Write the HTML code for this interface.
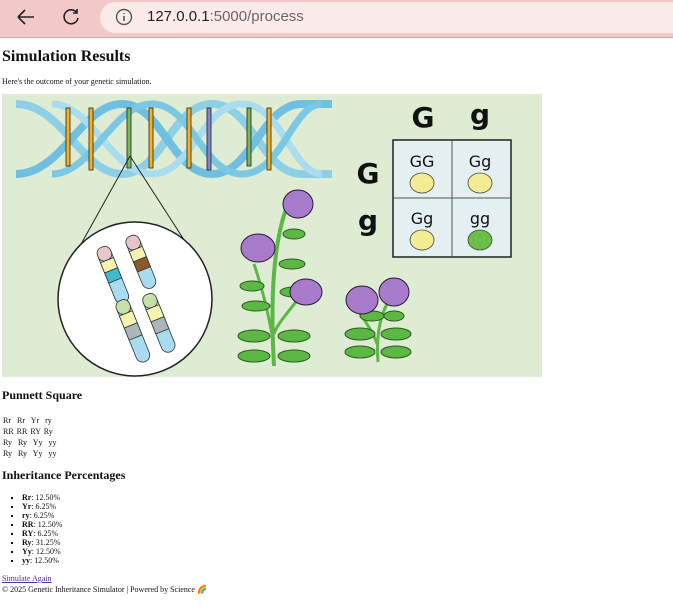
<!DOCTYPE html>
<html><head><style>
body{margin:0;width:673px;height:607px;overflow:hidden;background:#fff;font-family:"Liberation Serif",serif;color:#111;position:relative}
.bar{position:absolute;left:0;top:0;width:673px;height:37px;background:#f3c8c8;border-bottom:1px solid #d9a9a9}
.pill{position:absolute;left:100px;top:2px;width:590px;height:31px;border-radius:16px;background:#fbeceb}
.url{position:absolute;left:147px;top:8px;font-family:"Liberation Sans",sans-serif;font-size:15px;color:#222}
.url span{color:#6b6466}
.a{position:absolute;white-space:nowrap}
h2,h3{margin:0;font-weight:bold}
.s{font-size:8px;line-height:11px}
ul{margin:0;padding:0;list-style:none}
li{font-size:8px;line-height:9px;position:relative;padding-left:22px}
li:before{content:"";position:absolute;left:11px;top:4px;width:2px;height:2px;background:#111}
a{color:#5a2b9a}
</style></head><body>
<div class="bar"><div class="pill"></div>
<svg class="a" style="left:14px;top:8px" width="70" height="20" viewBox="0 0 70 20"><path d="M4 9H20M4 9L11 2M4 9L11 16" stroke="#222" stroke-width="1.6" fill="none"/><path d="M63 5A7 7 0 1 0 64 10M63 1V5H59" stroke="#222" stroke-width="1.6" fill="none"/></svg>
<svg class="a" style="left:115px;top:8px" width="18" height="18"><circle cx="9" cy="9" r="7.5" stroke="#555" stroke-width="1.4" fill="none"/><path d="M9 8V13M9 5V6" stroke="#555" stroke-width="1.6"/></svg>
<div class="url">127.0.0.1<span>:5000/process</span></div></div>
<h2 class="a" style="left:2px;top:48px;font-size:16px">Simulation Results</h2>
<div class="a s" style="left:2px;top:76px">Here's the outcome of your genetic simulation.</div>
<svg class="a" style="left:2px;top:94px" width="540" height="283" viewBox="0 0 540 283">
<rect width="540" height="283" fill="#deecd3"/>
<g fill="none">
<path d="M14 10 C60 10,80 80,120 80 C160 80,170 10,210 10 C250 10,260 80,300 80 L330 80" stroke="#8dd0e6" stroke-width="8"/>
<path d="M14 80 C60 80,80 10,120 10 C160 10,170 80,210 80 C250 80,260 10,300 10 L330 10" stroke="#6fc0e0" stroke-width="8"/>
<path d="M50 10 C90 10,110 80,150 80 C190 80,200 10,240 10 C280 10,290 80,320 80" stroke="#a8dcee" stroke-width="7"/>
<path d="M50 80 C90 80,110 10,150 10 C190 10,200 80,240 80 C280 80,290 10,320 10" stroke="#7cc8e4" stroke-width="7"/>
</g>
<g stroke="#222" stroke-width="0.8">
<rect x="64" y="14" width="4" height="58" fill="#f5b21e"/><rect x="87" y="14" width="4" height="62" fill="#f5b21e"/>
<rect x="125" y="14" width="4" height="60" fill="#7ab85a"/><rect x="147" y="14" width="4" height="60" fill="#f5b21e"/>
<rect x="185" y="14" width="4" height="60" fill="#f5b21e"/><rect x="205" y="14" width="4" height="62" fill="#7f86c9"/>
<rect x="245" y="14" width="4" height="58" fill="#7ab85a"/><rect x="265" y="14" width="4" height="62" fill="#f5b21e"/>
</g>
<path d="M128 62 L78 152 M128 62 L186 152" stroke="#222" stroke-width="1"/>
<circle cx="133" cy="205" r="77" fill="#fff" stroke="#222" stroke-width="1.5"/>
<g stroke="#333" stroke-width="0.8">
<g transform="translate(111 181) rotate(-22)"><rect x="-7" y="-30" width="14" height="60" rx="7" fill="#a8dcee"/><rect x="-7" y="-30" width="14" height="14" rx="6" fill="#e6c6c8"/><rect x="-7" y="-16" width="14" height="11" fill="#f7f2b0"/><rect x="-7" y="-5" width="14" height="11" fill="#3fb9d0"/></g>
<g transform="translate(139 168) rotate(-22)"><rect x="-7" y="-28" width="14" height="56" rx="7" fill="#a8dcee"/><rect x="-7" y="-28" width="14" height="14" rx="6" fill="#e6c6c8"/><rect x="-7" y="-14" width="14" height="11" fill="#f7f2b0"/><rect x="-7" y="-3" width="14" height="11" fill="#8a5a2b"/></g>
<g transform="translate(131 237) rotate(-22)"><rect x="-7" y="-33" width="14" height="66" rx="7" fill="#a8dcee"/><rect x="-7" y="-33" width="14" height="14" rx="6" fill="#c5e0a8"/><rect x="-7" y="-19" width="14" height="13" fill="#f7f2b0"/><rect x="-7" y="-6" width="14" height="13" fill="#a8b8b8"/></g>
<g transform="translate(157 229) rotate(-22)"><rect x="-7" y="-31" width="14" height="62" rx="7" fill="#a8dcee"/><rect x="-7" y="-31" width="14" height="14" rx="6" fill="#c5e0a8"/><rect x="-7" y="-17" width="14" height="13" fill="#f7f2b0"/><rect x="-7" y="-4" width="14" height="13" fill="#a8b8b8"/></g>
</g>
<g font-family="DejaVu Sans,sans-serif" font-weight="bold" fill="#111" text-anchor="middle">
<text x="421" y="33" font-size="28">G</text><text x="478" y="30" font-size="28">g</text>
<text x="366" y="89" font-size="28">G</text><text x="366" y="136" font-size="28">g</text></g>
<rect x="391" y="46" width="118" height="117" fill="#e4eff1" stroke="#222" stroke-width="1.5"/>
<path d="M450 46V163M391 104H509" stroke="#555" stroke-width="1"/>
<g font-family="DejaVu Sans,sans-serif" font-size="16" fill="#111" text-anchor="middle">
<text x="420" y="73">GG</text><text x="478" y="73">Gg</text><text x="420" y="130">Gg</text><text x="478" y="130">gg</text></g>
<g stroke="#444" stroke-width="0.8"><ellipse cx="420" cy="89" rx="12" ry="10" fill="#f3ec92"/><ellipse cx="478" cy="89" rx="12" ry="10" fill="#f3ec92"/><ellipse cx="420" cy="146" rx="12" ry="10" fill="#f3ec92"/><ellipse cx="478" cy="146" rx="12" ry="10" fill="#6cc04a"/></g>
<g stroke="#2c5a1c" stroke-width="1" fill="#5cb845">
<path d="M272 272 C268 200,272 150,284 115" fill="none" stroke="#5cb845" stroke-width="4"/>
<path d="M252 170 C262 200,266 220,270 240" fill="none" stroke="#5cb845" stroke-width="3"/>
<path d="M296 205 C285 220,275 230,272 240" fill="none" stroke="#5cb845" stroke-width="3"/>
<path d="M376 268 C374 240,378 220,388 205 M355 215 C365 230,372 240,375 250" fill="none" stroke="#5cb845" stroke-width="3"/>
<ellipse cx="252" cy="242" rx="16" ry="6"/><ellipse cx="292" cy="242" rx="16" ry="6"/><ellipse cx="252" cy="262" rx="16" ry="6"/><ellipse cx="292" cy="262" rx="16" ry="6"/>
<ellipse cx="254" cy="212" rx="14" ry="5"/><ellipse cx="292" cy="198" rx="14" ry="5"/><ellipse cx="250" cy="192" rx="12" ry="5"/><ellipse cx="290" cy="170" rx="13" ry="5"/><ellipse cx="292" cy="140" rx="11" ry="5"/><ellipse cx="256" cy="150" rx="11" ry="5"/>
<ellipse cx="358" cy="240" rx="15" ry="6"/><ellipse cx="394" cy="240" rx="15" ry="6"/><ellipse cx="358" cy="258" rx="15" ry="6"/><ellipse cx="394" cy="258" rx="15" ry="6"/><ellipse cx="370" cy="222" rx="12" ry="5"/><ellipse cx="392" cy="222" rx="10" ry="5"/>
</g>
<g fill="#a77bc9" stroke="#2a1a3a" stroke-width="1">
<ellipse cx="296" cy="110" rx="15" ry="14"/><ellipse cx="256" cy="154" rx="17" ry="14"/><ellipse cx="304" cy="198" rx="16" ry="13"/><ellipse cx="360" cy="206" rx="16" ry="14"/><ellipse cx="392" cy="198" rx="15" ry="14"/></g>
</svg>
<h3 class="a" style="left:2px;top:388px;font-size:12px">Punnett Square</h3>
<div class="a s" style="left:3px;top:415px;word-spacing:1px">Rr&nbsp; Rr&nbsp; Yr&nbsp; ry<br>RR RR RY Ry<br>Ry&nbsp; Ry&nbsp; Yy&nbsp; yy<br>Ry&nbsp; Ry&nbsp; Yy&nbsp; yy</div>
<h3 class="a" style="left:2px;top:468px;font-size:12px">Inheritance Percentages</h3>
<ul class="a" style="left:0;top:493px">
<li><b>Rr</b>: 12.50%</li><li><b>Yr</b>: 6.25%</li><li><b>ry</b>: 6.25%</li><li><b>RR</b>: 12.50%</li><li><b>RY</b>: 6.25%</li><li><b>Ry</b>: 31.25%</li><li><b>Yy</b>: 12.50%</li><li><b>yy</b>: 12.50%</li></ul>
<div class="a s" style="left:2px;top:573px"><a href="#">Simulate Again</a><br>© 2025 Genetic Inheritance Simulator | Powered by Science 🌈</div>
</body></html>
